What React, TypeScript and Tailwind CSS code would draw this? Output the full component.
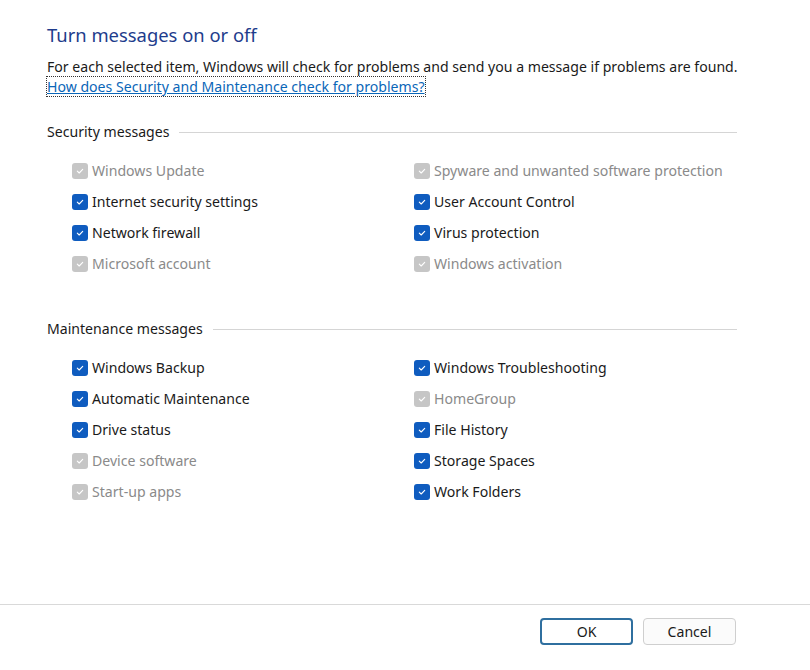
import React from 'react';

type Item = { label: string; checked: boolean; disabled?: boolean };

const security: Item[] = [
  { label: 'Windows Update', checked: true, disabled: true },
  { label: 'Spyware and unwanted software protection', checked: true, disabled: true },
  { label: 'Internet security settings', checked: true },
  { label: 'User Account Control', checked: true },
  { label: 'Network firewall', checked: true },
  { label: 'Virus protection', checked: true },
  { label: 'Microsoft account', checked: true, disabled: true },
  { label: 'Windows activation', checked: true, disabled: true },
];

const maintenance: Item[] = [
  { label: 'Windows Backup', checked: true },
  { label: 'Windows Troubleshooting', checked: true },
  { label: 'Automatic Maintenance', checked: true },
  { label: 'HomeGroup', checked: true, disabled: true },
  { label: 'Drive status', checked: true },
  { label: 'File History', checked: true },
  { label: 'Device software', checked: true, disabled: true },
  { label: 'Storage Spaces', checked: true },
  { label: 'Start-up apps', checked: true, disabled: true },
  { label: 'Work Folders', checked: true },
];

const CheckBox: React.FC<{ item: Item }> = ({ item }) => (
  <label className="flex items-center h-[31px] gap-[4px]">
    <span
      className={
        item.disabled
          ? 'w-[16px] h-[16px] rounded-[3px] bg-[#c6c6c6] flex items-center justify-center'
          : 'w-[16px] h-[16px] rounded-[3px] bg-[#0f5cbf] flex items-center justify-center'
      }
    >
      <svg width="10" height="10" viewBox="0 0 10 10" fill="none">
        <path d="M2.3 5.2 L4.2 7 L7.7 3.3" stroke="white" strokeWidth="1.1" strokeLinecap="round" strokeLinejoin="round" />
      </svg>
    </span>
    <span className={item.disabled ? 'text-[#8a8a8a]' : 'text-[#1a1a1a]'}>{item.label}</span>
  </label>
);

const Section: React.FC<{ title: string; items: Item[] }> = ({ title, items }) => (
  <div>
    <div className="flex items-center h-[20px] pr-[73px]">
      <span className="text-[#1a1a1a]">{title}</span>
      <div className="flex-1 ml-[10px] h-px bg-[#d5d5d5]" />
    </div>
    <div className="grid grid-cols-[342px_1fr] pl-[25px] mt-[13px]">
      {items.map((it) => (
        <CheckBox key={it.label} item={it} />
      ))}
    </div>
  </div>
);

const App: React.FC = () => {
  return (
    <div
      className="w-[810px] h-[670px] bg-white flex flex-col text-[14.1px] leading-[20px]"
      style={{ fontFamily: '"Segoe UI", "Noto Sans", sans-serif' }}
    >
      <div className="flex-1 pl-[47px] pt-[21px]">
        <h1 className="text-[18.4px] leading-[28px] text-[#1e3c8c]">Turn messages on or off</h1>
        <p className="mt-[8px] text-[#1a1a1a]">
          For each selected item, Windows will check for problems and send you a message if problems are found.
        </p>
        <a href="#" className="text-[#0a66b8] underline outline-1 outline-dotted outline-[#333]">
          How does Security and Maintenance check for problems?
        </a>
        <div className="mt-[25px]">
          <Section title="Security messages" items={security} />
        </div>
        <div className="mt-[40px]">
          <Section title="Maintenance messages" items={maintenance} />
        </div>
      </div>
      <div className="h-[66px] border-t border-[#d9d9d9] flex justify-end items-start pt-[13px] pr-[74px] gap-[10px]">
        <button className="w-[93px] h-[27px] rounded-[4px] border-2 border-[#2f6f9f] text-[#1a1a1a] bg-white">OK</button>
        <button className="w-[93px] h-[27px] rounded-[4px] border border-[#cfcfcf] text-[#1a1a1a] bg-[#fbfbfb]">Cancel</button>
      </div>
    </div>
  );
};

export default App;
